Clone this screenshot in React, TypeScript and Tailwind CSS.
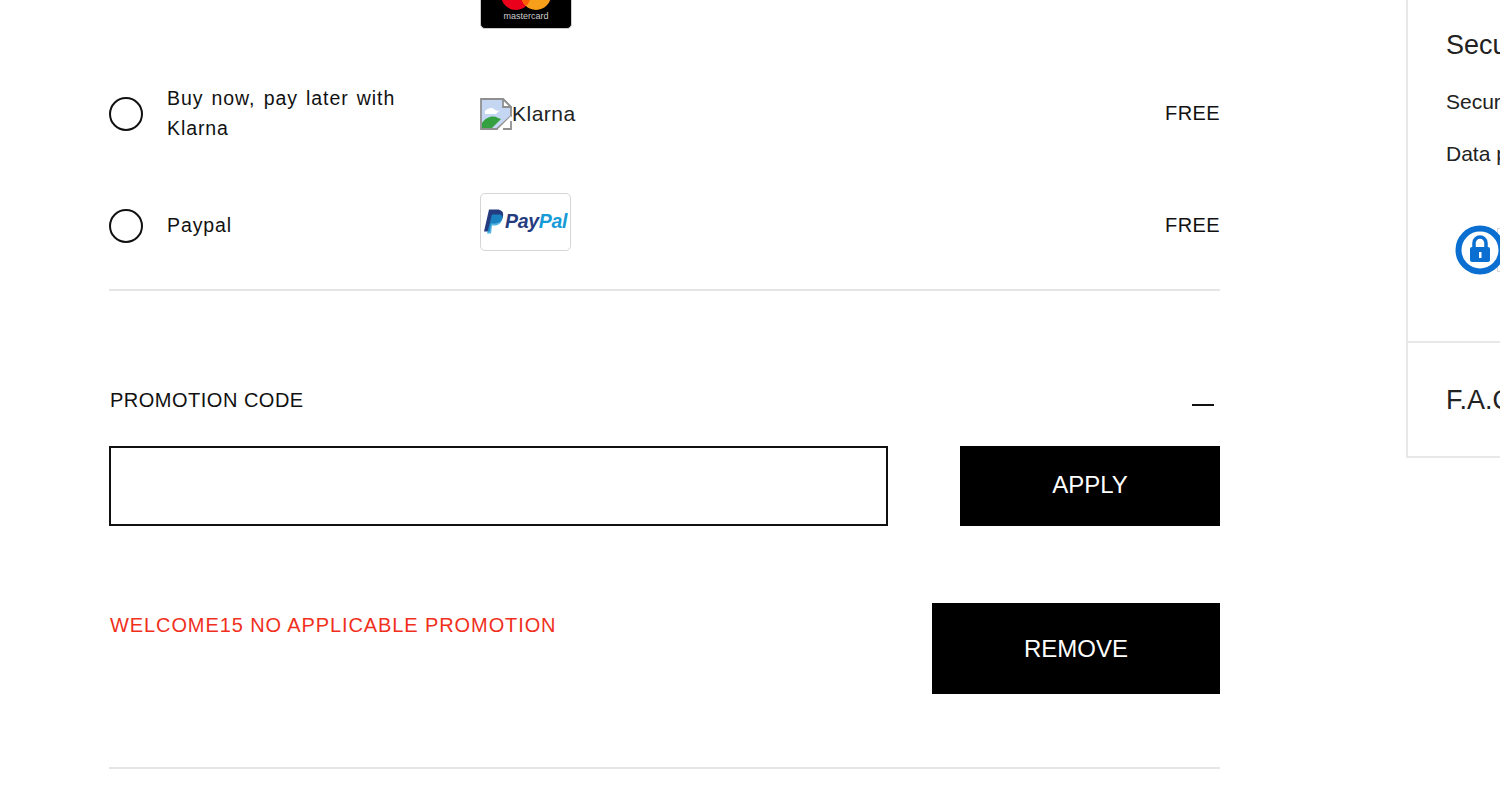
import type { ReactNode } from "react";

const sans = "font-['Liberation_Sans',Arial,sans-serif]";

function Radio() {
  return <div className="w-[34px] h-[34px] rounded-full border-2 border-[#111] shrink-0" />;
}

function MastercardLogo() {
  return (
    <div className="w-[92px] h-[58px] -mt-[29px] bg-black rounded-[5px] border border-[#ccc] flex flex-col items-center justify-end pb-[7px] overflow-hidden">
      <svg width="56" height="26" viewBox="0 0 56 26" className="-mb-[2px]">
        <circle cx="18" cy="9" r="15" fill="#eb001b" />
        <circle cx="38" cy="9" r="15" fill="#f79e1b" />
        <path d="M28 -2a15 15 0 0 1 0 22a15 15 0 0 1 0-22z" fill="#ff5f00" />
      </svg>
      <span className="text-[9px] leading-[10px] text-[#ccc] mt-[1px]">mastercard</span>
    </div>
  );
}

function BrokenImage() {
  return (
    <svg width="32" height="32" viewBox="0 0 32 32" className="shrink-0">
      <path d="M1 1h22l8 8v9L17 31H1z" fill="#c5d6f3" stroke="#8f8f8f" strokeWidth="1.8" />
      <path d="M5 13c3-3 7-4 9-2s4 2 6 1l-4 4H5z" fill="#fff" />
      <path d="M2 30v-5c4-6 11-8 16-5l3 1-9 9z" fill="#34a03f" />
      <path d="M23 1v8h8z" fill="#fff" stroke="#8f8f8f" strokeWidth="1.8" />
      <path d="M31 18L18 31h13z" fill="#fff" />
      <path d="M31 23v8h-8" fill="none" stroke="#8f8f8f" strokeWidth="1.8" />
    </svg>
  );
}

function PaypalLogo() {
  return (
    <div className="w-[91px] h-[58px] -mt-[8px] bg-white rounded-[5px] border border-[#d5d5d5] flex items-center pl-[3px] gap-[1px]">
      <svg width="20" height="28" viewBox="0 0 20 25" className="shrink-0">
        <path d="M5 0h8c4 0 7 2 6 7-1 5-4 7-9 7H7l-1.500 8H0z" fill="#253b80" />
        <path d="M8 5h7c3 0 4 2 3 5-1 4-4 6-8 6H8l-1 8H3z" fill="#179bd7" opacity="0.75" />
      </svg>
      <span className="text-[19.500px] leading-none font-bold italic tracking-[-0.3px]">
        <span className="text-[#253b80]">Pay</span>
        <span className="text-[#179bd7]">Pal</span>
      </span>
    </div>
  );
}

function PaymentRow({ label, logo, className }: { label: ReactNode; logo: ReactNode; className: string }) {
  return (
    <div className={`flex items-center ${className}`}>
      <Radio />
      <div className="w-[337px] pl-[24px] pb-[2px] text-[19.500px] leading-[30px] text-[#111] tracking-[0.9px] [word-spacing:2px] shrink-0">{label}</div>
      <div className="flex-1 flex items-center">{logo}</div>
      <span className="text-[20px] tracking-[0.4px] text-[#111] pb-[2px]">FREE</span>
    </div>
  );
}

export default function App() {
  return (
    <div className={`${sans} w-[1500px] h-[786px] overflow-hidden bg-white flex items-start`}>
      <main className="w-[1111px] ml-[109px] shrink-0">
        <div className="ml-[371px]">
          <MastercardLogo />
        </div>
        <PaymentRow
          className="mt-[55px] h-[60px]"
          label={<>Buy now, pay later with<br />Klarna</>}
          logo={
            <div className="flex items-center text-[21px] tracking-[0.5px] text-[#222]">
              <BrokenImage />
              <span>Klarna</span>
            </div>
          }
        />
        <PaymentRow className="mt-[52px] h-[60px]" label="Paypal" logo={<PaypalLogo />} />
        <div className="h-[2px] bg-[#e5e5e5] mt-[33px]" />

        <div className="flex items-center justify-between mt-[94px] h-[30px]">
          <span className="pl-[1px] text-[20px] tracking-[0.5px] text-[#111]">PROMOTION CODE</span>
          <div className="w-[22px] h-[2px] bg-[#111] mr-[6px] mt-[10px]" />
        </div>
        <div className="flex justify-between mt-[31px]">
          <input className="w-[779px] h-[80px] border-2 border-[#111] bg-white outline-none" />
          <button className="w-[260px] h-[80px] bg-black text-white text-[24px] pb-[3px]">APPLY</button>
        </div>
        <div className="flex justify-between items-start mt-[77px]">
          <span className="pl-[1px] text-[20px] leading-[44px] tracking-[0.9px] text-[#f0301c]">WELCOME15 NO APPLICABLE PROMOTION</span>
          <button className="w-[288px] h-[91px] bg-black text-white text-[24px]">REMOVE</button>
        </div>
        <div className="h-[2px] bg-[#e5e5e5] mt-[73px]" />
      </main>

      <aside className="ml-[186px] w-[200px] shrink-0 h-[458px] border-l-2 border-b-2 border-[#e8e8e8] overflow-hidden text-[#222]">
        <div className="h-[343px] border-b-2 border-[#e8e8e8] pl-[38px] pt-[26px]">
          <div className="text-[27px] leading-[38px] whitespace-nowrap">Secure payment</div>
          <div className="text-[21px] leading-[30px] mt-[23px] whitespace-nowrap">Secure payment</div>
          <div className="text-[21px] leading-[30px] mt-[22px] whitespace-nowrap">Data protection</div>
          <div className="flex items-center ml-[9px] mt-[56px]">
            <svg width="50" height="50" viewBox="0 0 50 50" className="relative z-10 shrink-0">
              <circle cx="25" cy="25" r="21.500" fill="#fff" stroke="#0a6fd1" strokeWidth="6" />
              <path d="M19 23v-5a6 6 0 0 1 12 0v5" fill="none" stroke="#0a6fd1" strokeWidth="3.500" />
              <rect x="15" y="22" width="20" height="15" rx="2" fill="#0a6fd1" />
              <rect x="24" y="27" width="2.500" height="6" fill="#fff" />
            </svg>
            <div className="w-[60px] h-[44px] -ml-[8px] border border-[#d5d5d5] shrink-0" />
          </div>
        </div>
        <div className="pl-[38px] pt-[38px] text-[27px] leading-[38px] whitespace-nowrap">F.A.Q</div>
      </aside>
    </div>
  );
}
